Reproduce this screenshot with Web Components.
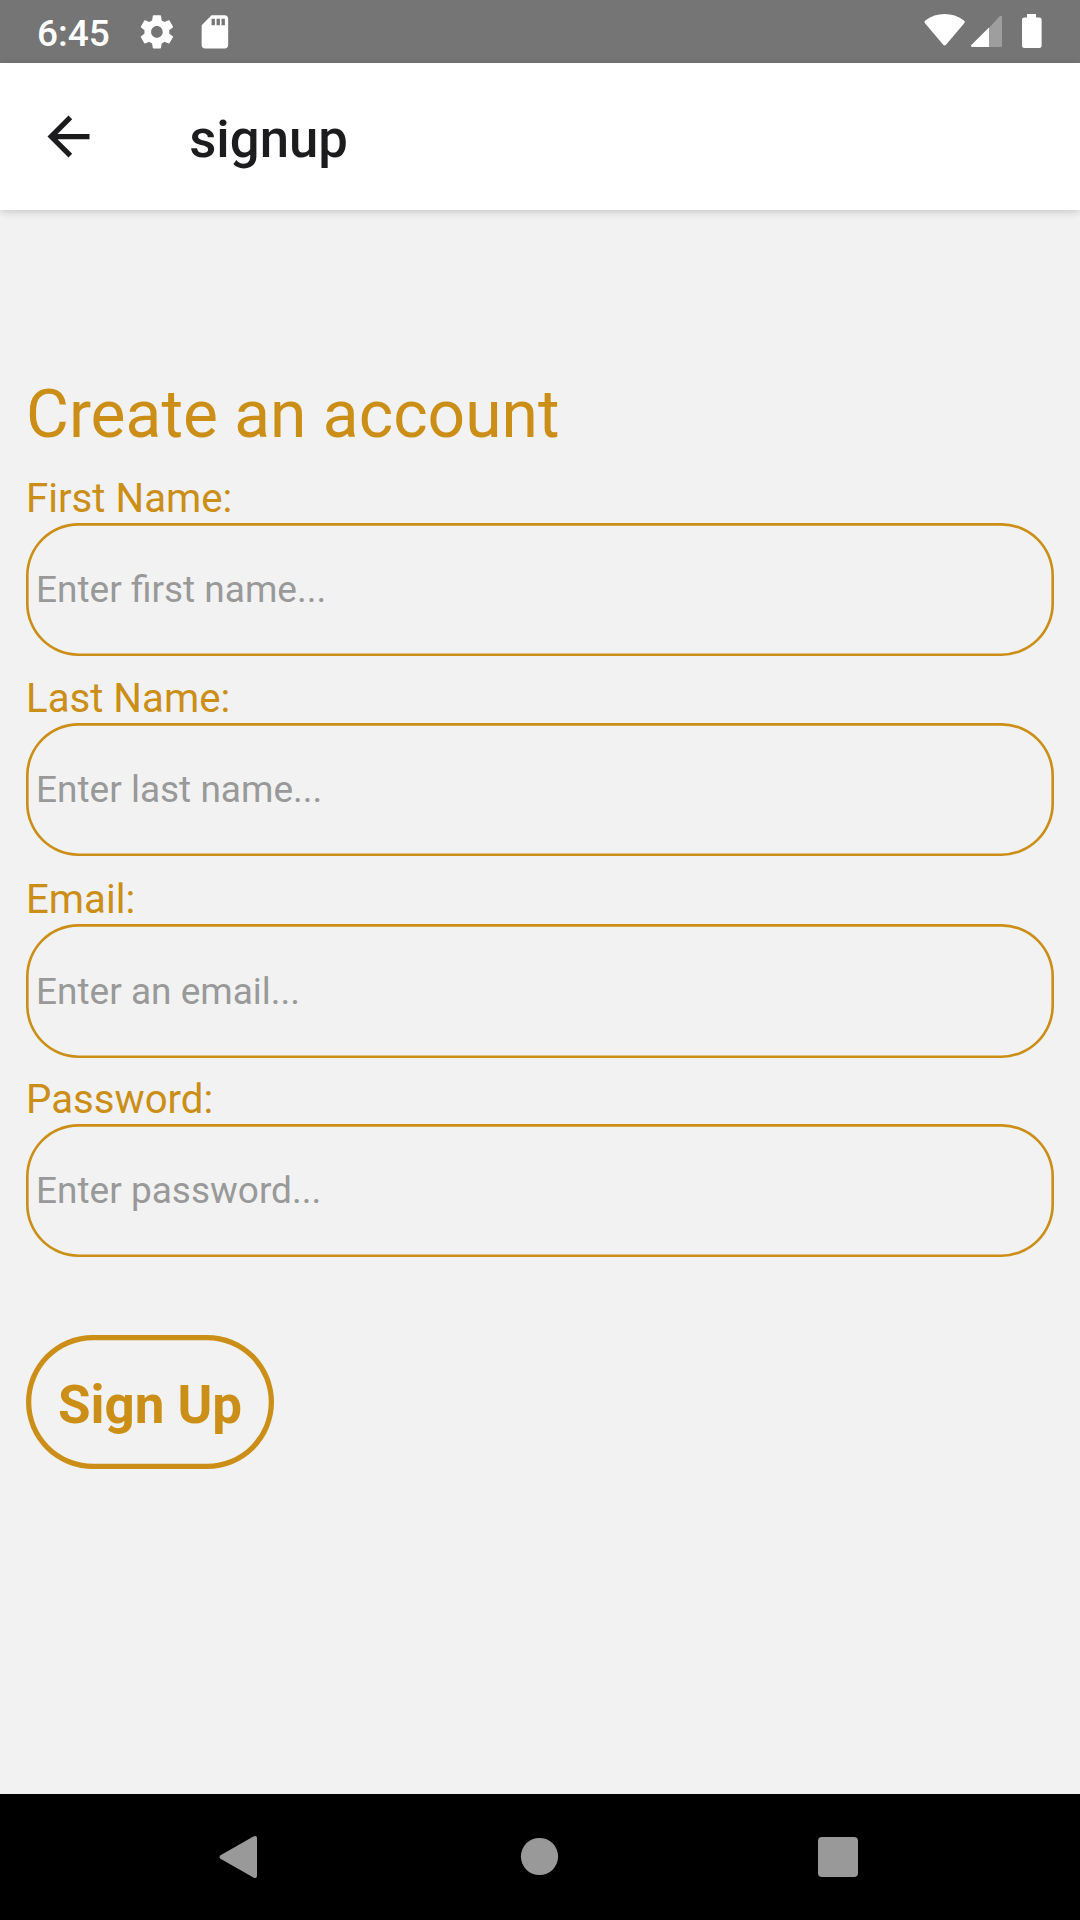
<!DOCTYPE html>
<html lang="en">
<head>
<meta charset="utf-8">
<title>signup</title>
<style>
body{margin:0;font-family:Roboto,sans-serif}
</style>
</head>
<body>
<signup-screen></signup-screen>
<script>
const define = (name, html) => {
  const t = document.createElement('template');
  t.innerHTML = html;
  customElements.define(name, class extends HTMLElement {
    constructor() {
      super();
      this.attachShadow({mode: 'open'}).append(t.content.cloneNode(true));
    }
  });
};

define('status-bar', `<style>
:host{display:flex;justify-content:space-between;height:63px;background:#757575;color:#fff;box-sizing:border-box;padding:0 38px 0 37px;flex:none}
.side{display:flex;align-items:center}
.time{font-size:37px;font-weight:500;line-height:43px;width:100px;padding-top:3px}
svg{display:block;flex:none}
.gear{margin-right:18.4px}
</style>
<div class="side"><span class="time"><slot></slot></span>
<svg class="gear" width="39.8" height="39.8" viewBox="0 0 24 24" fill="#fff"><path d="M19.43 12.98c.04-.32.07-.64.07-.98s-.03-.66-.07-.98l2.11-1.65c.19-.15.24-.42.12-.64l-2-3.46c-.12-.22-.39-.3-.61-.22l-2.49 1c-.52-.4-1.08-.73-1.69-.98l-.38-2.65C14.46 2.18 14.25 2 14 2h-4c-.25 0-.46.18-.49.42l-.38 2.65c-.61.25-1.17.59-1.69.98l-2.49-1c-.23-.09-.49 0-.61.22l-2 3.46c-.13.22-.07.49.12.64l2.11 1.65c-.04.32-.07.65-.07.98s.03.66.07.98l-2.11 1.65c-.19.15-.24.42-.12.64l2 3.46c.12.22.39.3.61.22l2.49-1c.52.4 1.08.73 1.69.98l.38 2.65c.03.24.24.42.49.42h4c.25 0 .46-.18.49-.42l.38-2.65c.61-.25 1.17-.59 1.69-.98l2.49 1c.23.09.49 0 .61-.22l2-3.46c.12-.22.07-.49-.12-.64l-2.11-1.65zM12 15.5c-1.93 0-3.5-1.57-3.5-3.5s1.57-3.5 3.5-3.5 3.5 1.57 3.5 3.5-1.57 3.5-3.5 3.5z"/></svg>
<svg width="39.8" height="39.8" viewBox="0 0 24 24" fill="#fff"><path d="M18 2h-8L4.02 8 4 20c0 1.1.9 2 2 2h12c1.1 0 2-.9 2-2V4c0-1.1-.9-2-2-2zm-6 6h-2V4h2v4zm3 0h-2V4h2v4zm3 0h-2V4h2v4z"/></svg></div>
<div class="side"><svg width="122" height="63" viewBox="920 0 122 63" fill="#fff">
<path d="M925.2 23.4Q923.4 21.6 925.6 20.2Q934 14 944.6 14T963.600 20.200Q965.800 21.600 964 23.400L946 44.800Q944.600 46.400 943.200 44.800Z"/>
<path fill-opacity=".3" d="M989 28L998.700 17.200Q1002 14.300 1002 17.500V45.500Q1002 47 1000.500 47H989Z"/>
<path d="M989 27.400V47H972.500Q969.800 46.600 971.600 44.700Z"/>
<path d="M1027 14h9v3.600h3.400q2.200 0 2.200 2.200v26q0 2.200-2.200 2.200h-15.200q-2.200 0-2.200-2.200v-26q0-2.200 2.200-2.200h2.800z"/></svg></div>`);

define('app-header', `<style>
:host{display:flex;align-items:center;height:147px;background:#fff;color:#1c1c1e;box-sizing:border-box;padding-left:36.75px;flex:none;z-index:1;box-shadow:0 2px 8px rgba(0,0,0,.18)}
svg{display:block}
h1{margin:4px 0 0 89.5px;font-size:52.7px;line-height:62px;font-weight:500}
</style>
<svg width="63" height="63" viewBox="0 0 24 24" fill="currentColor"><path d="M20 11H7.830l5.590-5.590L12 4l-8 8 8 8 1.410-1.410L7.830 13H20v-2z"/></svg>
<h1><slot></slot></h1>`);

define('form-field', `<style>
:host{display:block}
.label{font-size:40.2px;line-height:44px;height:46px;color:#cb8e16}
.box{display:flex;align-items:center;height:var(--box-height,133px);border-radius:52.5px;box-shadow:inset 0 0 0 2.625px #cb8e16;padding-left:10px;font-size:37px;line-height:43px;color:#999}
</style>
<div class="label"><slot name="label"></slot></div>
<div class="box"><slot></slot></div>`);

define('outline-button', `<style>
:host{display:block}
button{display:flex;align-items:center;justify-content:center;width:248px;height:134px;box-sizing:border-box;padding:5px 0 0;border:none;border-radius:67px;box-shadow:inset 0 0 0 5.25px #cb8e16;background:none;color:#cb8e16;font:700 52.9px/62px Roboto,sans-serif}
</style><button><slot></slot></button>`);

define('nav-bar', `<style>
:host{display:flex;justify-content:center;height:126px;background:#000;flex:none}
svg{display:block}
</style><svg width="1080" height="126" viewBox="0 1794 1080 126" fill="#999">
<path d="M220.500 1855.300L253.400 1836.500Q256.800 1834.800 257 1838V1876Q256.800 1879.200 253.400 1877.500L220.500 1858.700Q218.500 1857 220.500 1855.300Z"/>
<circle cx="539.500" cy="1856.500" r="18.600"/><rect x="818" y="1837" width="40" height="40" rx="4"/></svg>`);

define('signup-screen', `<style>
:host{display:flex;flex-direction:column;width:1080px;height:1920px;background:#f2f2f2;overflow:hidden}
main{flex:1;padding:166px 26px 0}
h2{margin:0 0 24px;font-size:65.9px;line-height:77px;font-weight:400;color:#cb8e16}
form-field{margin-bottom:21px}
.last{margin-bottom:22px}
.email{--box-height:134px;margin-bottom:20px}
outline-button{margin-top:78px}
.password{margin-bottom:0}
</style>
<status-bar>6:45</status-bar>
<app-header>signup</app-header>
<main>
<h2>Create an account</h2>
<form-field><span slot="label">First Name:</span>Enter first name...</form-field>
<form-field class="last"><span slot="label">Last Name:</span>Enter last name...</form-field>
<form-field class="email"><span slot="label">Email:</span>Enter an email...</form-field>
<form-field class="password"><span slot="label">Password:</span>Enter password...</form-field>
<outline-button>Sign Up</outline-button>
</main>
<nav-bar></nav-bar>`);
</script>
</body>
</html>
